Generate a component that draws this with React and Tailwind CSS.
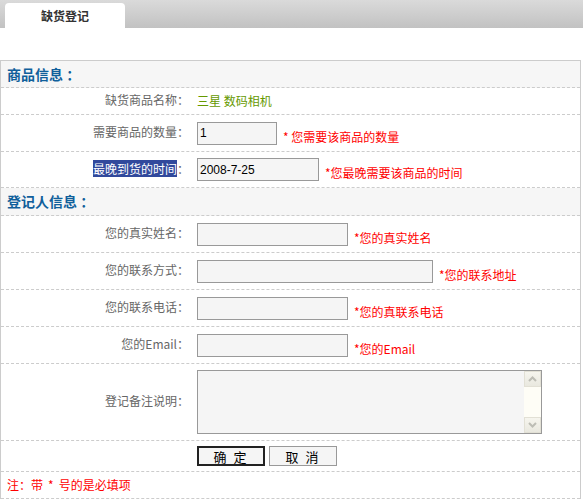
import React from "react";

const font = { fontFamily: '"Noto Sans CJK SC", "Noto Sans", sans-serif' };

function SectionHead({ title, className }) {
  return (
    <div
      className={`flex items-center border-b border-dashed border-[#cccccc] bg-[#f6f6f6] pl-[6px] text-[14px] font-bold text-[#105f9b] ${className}`}
    >
      {title}
    </div>
  );
}

function Row({ label, children, className = "h-[37px]" }) {
  return (
    <div className={`flex items-center border-b border-dashed border-[#cccccc] ${className}`}>
      <div className="w-[188px] -mt-[2px] text-right text-[12px] text-[#666666]">{label}</div>
      <div className="flex items-end pl-[8px]">{children}</div>
    </div>
  );
}

function Field({ width, value = "" }) {
  return (
    <input
      defaultValue={value}
      className={`h-[23px] ${width} border border-[#999999] bg-[#f5f5f5] px-[2px] font-['Liberation_Sans',Arial,sans-serif] text-[12px] text-black outline-none`}
    />
  );
}

function Hint({ children }) {
  return <span className="mb-[2px] ml-[6px] text-[12px] leading-[12px] text-[#ff0000]">{children}</span>;
}

function Arrow({ up }) {
  return (
    <svg width="9" height="6" viewBox="0 0 9 6">
      <path
        d={up ? "M1 5 L4.5 1.5 L8 5" : "M1 1 L4.5 4.5 L8 1"}
        fill="none"
        stroke="#bdbdb5"
        strokeWidth="2"
      />
    </svg>
  );
}

export default function App() {
  return (
    <div className="min-h-[504px] w-[583px] bg-white" style={font}>
      {/* top tab bar */}
      <div className="flex h-[28px] items-end bg-gradient-to-b from-[#dadada] to-[#c2c2c2] pl-[5px]">
        <div className="flex h-[25px] w-[120px] items-center justify-center rounded-t-[4px] bg-white text-[12px] font-bold text-[#333333]">
          缺货登记
        </div>
      </div>

      <div className="mt-[32px] w-[581px] border-x border-t border-[#cccccc]">
        <SectionHead title="商品信息 ：" className="h-[27px]" />
        <Row label="缺货商品名称：" className="h-[27px]">
          <span className="text-[12px] text-[#669900]">三星 数码相机</span>
        </Row>
        <Row label="需要商品的数量：" className="h-[37px]">
          <Field width="w-[80px]" value="1" />
          <Hint>* 您需要该商品的数量</Hint>
        </Row>
        <Row
          label={
            <>
              <span className="bg-[#31499c] text-white">最晚到货的时间</span>：
            </>
          }
          className="h-[36px]"
        >
          <Field width="w-[122px]" value="2008-7-25" />
          <Hint>*您最晚需要该商品的时间</Hint>
        </Row>

        <SectionHead title="登记人信息 ：" className="h-[28px]" />
        <Row label="您的真实姓名：">
          <Field width="w-[151px]" />
          <Hint>*您的真实姓名</Hint>
        </Row>
        <Row label="您的联系方式：">
          <Field width="w-[236px]" />
          <Hint>*您的联系地址</Hint>
        </Row>
        <Row label="您的联系电话：">
          <Field width="w-[151px]" />
          <Hint>*您的真联系电话</Hint>
        </Row>
        <Row label="您的Email：">
          <Field width="w-[151px]" />
          <Hint>*您的Email</Hint>
        </Row>
        <Row label="登记备注说明：" className="h-[77px]">
          <div className="flex h-[64px] w-[345px] border border-[#999999] bg-[#f5f5f5]">
            <textarea className="flex-1 resize-none bg-transparent px-[2px] text-[12px] outline-none" />
            <div className="flex w-[17px] flex-col bg-[#fefdf6]">
              <div className="flex h-[16px] items-center justify-center border border-[#e2e0d5] bg-gradient-to-b from-[#f6f5ee] to-[#e9e8df]">
                <Arrow up />
              </div>
              <div className="flex-1" />
              <div className="flex h-[16px] items-center justify-center border border-[#e2e0d5] bg-gradient-to-b from-[#f6f5ee] to-[#e9e8df]">
                <Arrow />
              </div>
            </div>
          </div>
        </Row>

        <div className="flex h-[31px] items-center gap-[4px] border-b border-dashed border-[#cccccc] pl-[196px]">
          <button className="h-[20px] w-[68px] border-2 border-[#222222] bg-[#f5f5f5] text-[13px] leading-none tracking-[2px] text-black">
            确 定
          </button>
          <button className="h-[20px] w-[68px] border border-[#999999] bg-[#f5f5f5] text-[13px] leading-none tracking-[2px] text-black">
            取 消
          </button>
        </div>

        <div className="flex h-[27px] items-center border-b border-dashed border-[#cccccc] pl-[6px] text-[12px] text-[#ff0000]">
          注：带<span className="mx-[5px]">*</span>号的是必填项
        </div>
      </div>
    </div>
  );
}
